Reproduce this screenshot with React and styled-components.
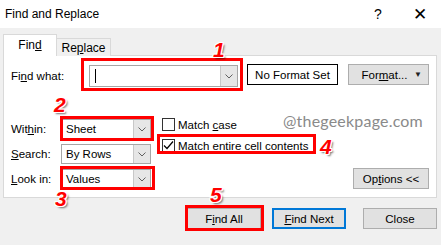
import React from 'react';
import styled, { createGlobalStyle } from 'styled-components';

const GlobalStyle = createGlobalStyle`
  html, body {
    margin: 0;
    padding: 0;
    background: #f0f0f0;
  }
  body {
    font-family: "Liberation Sans", Arial, sans-serif;
    font-size: 11.5px;
    color: #000;
  }
`;

const Dialog = styled.div`
  width: 441px;
  height: 245px;
  display: flex;
  flex-direction: column;
  background: #f0f0f0;
  overflow: hidden;
`;

const TitleBar = styled.div`
  height: 28px;
  background: #fff;
  display: flex;
  align-items: center;
  padding-left: 5px;
`;

const Title = styled.div`
  flex: 1;
  font-size: 12px;
`;

const TitleButton = styled.div`
  width: 42px;
  height: 28px;
  display: flex;
  align-items: center;
  justify-content: center;
  font-size: ${p => p.$size || 13}px;
`;

const Body = styled.div`
  flex: 1;
  display: flex;
  flex-direction: column;
  padding: 7px 0 0 3px;
`;

const Tabs = styled.div`
  display: flex;
  align-items: flex-end;
  height: 21px;
  position: relative;
  z-index: 1;
  margin-bottom: -1px;
`;

const Tab = styled.div`
  width: 54px;
  box-sizing: border-box;
  display: flex;
  align-items: center;
  justify-content: center;
  font-size: 12px;
  border: 1px solid #d9d9d9;
  border-bottom: none;
  height: ${p => (p.$active ? 22 : 18)}px;
  background: ${p => (p.$active ? '#fff' : '#f0f0f0')};
  ${p => !p.$active && 'border-left: none;'}
  padding-bottom: ${p => (p.$active ? 2 : 0)}px;
`;

const Panel = styled.div`
  width: 434px;
  height: 143px;
  box-sizing: border-box;
  background: #fff;
  border: 1px solid #d9d9d9;
  padding: 9px 7px 9px 7px;
  display: flex;
  flex-direction: column;
  position: relative;
`;

const TopRow = styled.div`
  display: flex;
  align-items: flex-start;
  height: 22px;
`;

const Label = styled.div`
  width: ${p => p.$w}px;
  height: ${p => p.$h || 20}px;
  display: flex;
  align-items: center;
  white-space: nowrap;
`;

const Combo = styled.div`
  width: ${p => p.$w}px;
  height: ${p => p.$h}px;
  box-sizing: border-box;
  border: 1px solid #a6a6a6;
  background: #fff;
  display: flex;
  align-items: stretch;
`;

const ComboText = styled.div`
  flex: 1;
  display: flex;
  align-items: center;
  padding-left: 4px;
`;

const Caret = styled.div`
  width: 1px;
  height: 14px;
  background: #000;
  margin-left: 1px;
`;

const ComboArrow = styled.div`
  width: 16px;
  background: #e6e6e6;
  border-left: 1px solid #c8c8c8;
  display: flex;
  align-items: center;
  justify-content: center;
`;

const FormatBox = styled.div`
  width: 91px;
  height: 21px;
  box-sizing: border-box;
  border: 1px solid #000;
  margin: -1px 0 0 9px;
  display: flex;
  align-items: center;
  justify-content: center;
`;

const Button = styled.div`
  width: ${p => p.$w}px;
  height: 21px;
  box-sizing: border-box;
  background: #e1e1e1;
  border: ${p => (p.$default ? '2px solid #0078d7' : '1px solid #adadad')};
  display: flex;
  align-items: center;
  justify-content: center;
  margin-left: ${p => p.$ml || 0}px;
  margin-top: ${p => p.$mt || 0}px;
`;

const FormatLabel = styled.span`
  flex: 1;
  text-align: center;
  padding-left: 6px;
`;

const DropTri = styled.span`
  width: 14px;
  font-size: 8px;
  color: #222;
`;

const Lower = styled.div`
  display: flex;
  flex: 1;
  margin-top: 32px;
`;

const LeftCol = styled.div`
  display: flex;
  flex-direction: column;
  gap: 5px;
`;

const FieldRow = styled.div`
  display: flex;
  align-items: center;
`;

const MidCol = styled.div`
  display: flex;
  flex-direction: column;
  gap: 8px;
  margin: -1px 0 0 11px;
`;

const CheckRow = styled.div`
  display: flex;
  align-items: center;
  gap: 3px;
  height: 13px;
  white-space: nowrap;
`;

const Box = styled.div`
  width: 13px;
  height: 13px;
  box-sizing: border-box;
  border: 1px solid #333;
  background: #fff;
  display: flex;
  align-items: center;
  justify-content: center;
`;

const RightCol = styled.div`
  flex: 1;
  display: flex;
  flex-direction: column;
  justify-content: flex-end;
  align-items: flex-end;
`;

const Watermark = styled.div`
  position: absolute;
  left: 279px;
  top: 55px;
  font-family: Lato, "Noto Sans", sans-serif;
  font-size: 16px;
  color: #8a8a8a;
  letter-spacing: 0.2px;
`;

const Footer = styled.div`
  display: flex;
  justify-content: flex-end;
  padding: 10px 4px 0 0;
`;

const Mark = styled.div`
  position: relative;
  display: flex;
  &::after {
    content: '';
    position: absolute;
    top: -${p => p.$i[0]}px;
    right: -${p => p.$i[1]}px;
    bottom: -${p => p.$i[2]}px;
    left: -${p => p.$i[3]}px;
    border: 3px solid #f00;
    pointer-events: none;
  }
`;

const Num = styled.span`
  position: absolute;
  left: ${p => p.$x}px;
  top: ${p => p.$y}px;
  font-family: "Liberation Sans", Arial, sans-serif;
  font-style: italic;
  font-weight: 900;
  font-size: 21px;
  line-height: 21px;
  color: #f00;
  z-index: 2;
  text-shadow:
    -1px -1px 0 #fff, 1px -1px 0 #fff, -1px 1px 0 #fff, 1px 1px 0 #fff,
    0 -1px 0 #fff, 0 1px 0 #fff, -1px 0 0 #fff, 1px 0 0 #fff,
    2px 2px 2px rgba(0, 0, 0, 0.55);
`;

const Chevron = () => (
  <svg width="8" height="5" viewBox="0 0 8 5">
    <path d="M0.5 0.5 L4 4 L7.5 0.5" fill="none" stroke="#606060" strokeWidth="1" />
  </svg>
);

const Check = () => (
  <svg width="11" height="11" viewBox="0 0 11 11">
    <path d="M1 5.5 L4 8.5 L10 1.5" fill="none" stroke="#000" strokeWidth="1.2" />
  </svg>
);

const Select = ({ w, h, children }) => (
  <Combo $w={w} $h={h}>
    <ComboText>{children}</ComboText>
    <ComboArrow>
      <Chevron />
    </ComboArrow>
  </Combo>
);

export default function App() {
  return (
    <>
      <GlobalStyle />
      <Dialog>
        <TitleBar>
          <Title>Find and Replace</Title>
          <TitleButton $size={14}>?</TitleButton>
          <TitleButton $size={17}>✕</TitleButton>
        </TitleBar>
        <Body>
          <Tabs>
            <Tab $active>Fin<u>d</u></Tab>
            <Tab>Re<u>p</u>lace</Tab>
          </Tabs>
          <Panel>
            <TopRow>
              <Label $w={78} $h={22}>Fi<u>n</u>d what:</Label>
              <Mark $i={[7, 5, 4, 8]}>
                <Select w={149} h={22}>
                  <Caret />
                </Select>
                <Num $x={124} $y={-26}>1</Num>
              </Mark>
              <FormatBox>No Format Set</FormatBox>
              <Button $w={81} $ml={10} $mt={-1}>
                <FormatLabel>For<u>m</u>at...</FormatLabel>
                <DropTri>▼</DropTri>
              </Button>
            </TopRow>
            <Lower>
              <LeftCol>
                <FieldRow>
                  <Label $w={50}>Wit<u>h</u>in:</Label>
                  <Mark $i={[3, 3, 2, 1]}>
                    <Select w={90} h={20}>Sheet</Select>
                    <Num $x={-7} $y={-25}>2</Num>
                  </Mark>
                </FieldRow>
                <FieldRow>
                  <Label $w={50}><u>S</u>earch:</Label>
                  <Select w={90} h={20}>By Rows</Select>
                </FieldRow>
                <FieldRow>
                  <Label $w={50}><u>L</u>ook in:</Label>
                  <Mark $i={[3, 4, 1, 1]}>
                    <Select w={90} h={20}>Values</Select>
                    <Num $x={-6} $y={19}>3</Num>
                  </Mark>
                </FieldRow>
              </LeftCol>
              <MidCol>
                <CheckRow>
                  <Box />
                  <span>Match <u>c</u>ase</span>
                </CheckRow>
                <Mark $i={[5, 8, 2, 5]}>
                  <CheckRow>
                    <Box><Check /></Box>
                    <span>Match entire cell c<u>o</u>ntents</span>
                  </CheckRow>
                  <Num $x={158} $y={-3}>4</Num>
                </Mark>
              </MidCol>
              <RightCol>
                <Button $w={76}>Op<u>t</u>ions &lt;&lt;</Button>
              </RightCol>
            </Lower>
            <Watermark>@thegeekpage.com</Watermark>
          </Panel>
          <Footer>
            <Mark $i={[3, 3, 2, 2]}>
              <Button $w={74}>F<u>i</u>nd All</Button>
              <Num $x={23} $y={-24}>5</Num>
            </Mark>
            <Button $w={74} $ml={11} $default><u>F</u>ind Next</Button>
            <Button $w={74} $ml={17}>Close</Button>
          </Footer>
        </Body>
      </Dialog>
    </>
  );
}
